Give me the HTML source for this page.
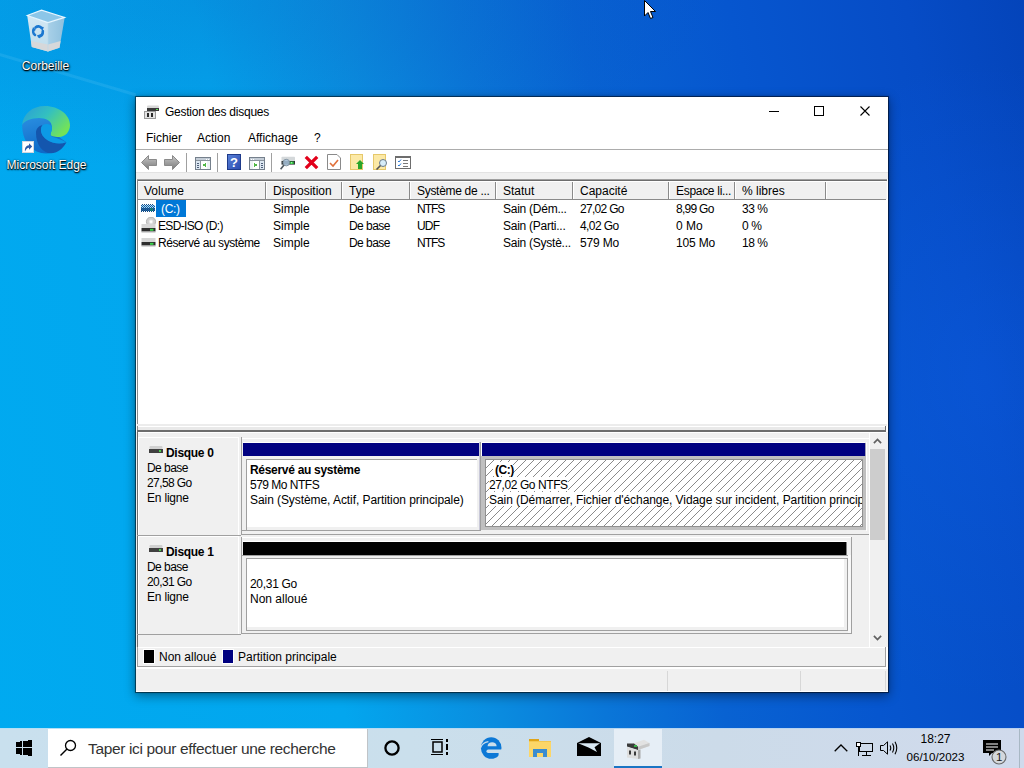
<!DOCTYPE html>
<html><head><meta charset="utf-8">
<style>
*{box-sizing:border-box;margin:0;padding:0}
html,body{width:1024px;height:768px;overflow:hidden}
body{position:relative;font-family:"Liberation Sans",sans-serif;font-size:12px;color:#000;
background:
 radial-gradient(ellipse 520px 170px at 200px 0px, rgba(12,70,170,.2), rgba(12,70,170,0)),
 radial-gradient(ellipse 260px 320px at 980px 380px, rgba(20,110,255,.22), rgba(20,110,255,0)),
 linear-gradient(78deg,#00aaf0 0%,#03a6ee 30%,#0a8ee0 42%,#0a76d8 52%,#0862d2 62%,#0656cf 75%,#064cc6 90%,#0444ba 100%);}
.a{position:absolute}
.t{position:absolute;white-space:pre;line-height:15px}
#win{left:135px;top:96px;width:754px;height:597px;background:#fff;background-clip:padding-box;border:1px solid rgba(0,0,0,.45);box-shadow:0 3px 10px rgba(0,0,0,.4),0 0 2px rgba(0,0,0,.2)}
</style></head><body>
<div class="a" style="left:0;top:0;width:136px;height:200px;background:linear-gradient(196.5deg, rgba(190,235,255,0) 0px, rgba(190,235,255,0) 89px, rgba(190,235,255,.1) 90px, rgba(190,235,255,.1) 92px, rgba(190,235,255,0) 93px)"></div><svg class="a" style="left:22px;top:6px;" width="48" height="50" viewBox="0 0 48 50"><defs><linearGradient id="binl" x1="0" y1="0" x2="0" y2="1"><stop offset="0" stop-color="#d4e8f4"/><stop offset="1" stop-color="#bcdcec"/></linearGradient><linearGradient id="binr" x1="0" y1="0" x2="1" y2="0"><stop offset="0" stop-color="#a8d0e8"/><stop offset="1" stop-color="#8ec0de"/></linearGradient></defs><path d="M5.2 9.4L26 16.6V45.6L9.8 41Z" fill="url(#binl)"/><path d="M26 16.6L42.7 11.4L37.5 41.7L26 45.6Z" fill="url(#binr)"/><path d="M5.2 9.4L19.5 4.2L42.7 11.4L26 16.6Z" fill="#8cc6e8"/><path d="M5.2 9.4L19.5 4.2L42.7 11.4L26 16.6Z" fill="none" stroke="#e8f6ff" stroke-width="1.1"/><path d="M8.9 35L26 38.5L38.6 35L37.5 41.7L26 45.6L9.8 41Z" fill="#d6d8da"/><path d="M26 16.6V45.6" stroke="#b8d8ea" stroke-width="0.6"/><g fill="none" stroke="#1c78d0" stroke-width="2.6" stroke-linecap="round"><path d="M13.5 21.5C15.5 19.8 18 20 19.5 22"/><path d="M20.8 25C21 28 19.5 30 17 30.5"/><path d="M13 29C11 27.5 10.8 25 11.8 23.5"/></g><g fill="#1c78d0"><path d="M17.5 20.5L21.8 21L20.5 25Z"/><path d="M19 28L18 32.5L14.8 29.5Z"/><path d="M10 25.5L11 21L14 24Z"/></g></svg><div class="t" style="left:0;top:59px;width:91px;text-align:center;color:#fff;font-size:12px;text-shadow:0 1px 1px #000,1px 1px 2px rgba(0,0,0,.8),0 0 2px rgba(0,0,0,.6)">Corbeille</div><svg class="a" style="left:22px;top:106px;" width="48" height="48" viewBox="0 0 48 48"><defs><linearGradient id="eg1" x1="0" y1="0" x2="1" y2="0.6"><stop offset="0" stop-color="#2a9cd8"/><stop offset="0.5" stop-color="#33c0c0"/><stop offset="1" stop-color="#72e25a"/></linearGradient><linearGradient id="eg2" x1="0" y1="0" x2="0.3" y2="1"><stop offset="0" stop-color="#2a8ee0"/><stop offset="1" stop-color="#0e6ac8"/></linearGradient></defs><path d="M0.2 19C0 36 11 47.5 24 47.5C33 47.5 40 43 44.3 36.3L37 31L29 28.5L30 21C30 15 24 12 17 12C9 12 2 15 0.2 19Z" fill="url(#eg2)"/><path d="M0.2 19C1 8 10 0 23 0C37 0 48 9 48 19C48 26 43 31 37 31C32 31 28.5 30 28.5 28.5C28.5 27 30 25 30 21C30 15 24 12 17 12C9 12 2 15 0.2 19Z" fill="url(#eg1)"/><path d="M21 19C16 20 14 23 14 27C14 39 21 47.3 29 47.3C35 47.3 41 43 44.3 36.3C38 38.5 31 37.5 26 34.5C21 31.5 18.5 27 19 23C19.3 21 20 19.6 21 19Z" fill="#1456ae"/><path d="M21 19C23 17.5 27 17.5 29.5 20C30.5 22 30 24.5 28.8 26.8C28.3 28 28.4 29.6 29.5 30.2C33 32 39 33 44.3 36.3C38 38.5 31 37.5 26 34.5C21 31.5 18.5 27 19 23C19.3 21 20 19.6 21 19Z" fill="#0c9ae6"/></svg><svg class="a" style="left:22px;top:141px;" width="12" height="12" viewBox="0 0 12 12"><rect x="0.5" y="0.5" width="11" height="11" fill="#fff" stroke="#d0d8e0"/><path d="M3 10.5C2.5 7 4 4.5 7 4.2V2.3L10.2 5.5L7 8.7V6.8C5.3 7 4 8.3 3 10.5Z" fill="#2c5aa8"/></svg><div class="t" style="left:0;top:158px;width:93px;text-align:center;color:#fff;font-size:12px;text-shadow:0 1px 1px #000,1px 1px 2px rgba(0,0,0,.8),0 0 2px rgba(0,0,0,.6)">Microsoft Edge</div><svg class="a" style="left:644px;top:0px;" width="13" height="20" viewBox="0 0 13 20"><path d="M0.5 0.5V16L4 12.5L6.5 18.5L9 17.5L6.5 11.5H11.5Z" fill="#fff" stroke="#000" stroke-width="1"/></svg>
<div id="win" class="a">
<svg class="a" style="left:8px;top:7px;" width="16" height="16" viewBox="0 0 16 16"><rect x="3" y="1.5" width="12" height="3" rx="1" fill="#d8d8d8"/><rect x="3" y="4" width="12" height="3" fill="#3a3a3a"/><rect x="12" y="5" width="2" height="1" fill="#5fe05f"/><rect x="0.5" y="7.5" width="11" height="7" fill="#e4e4e4" stroke="#9a9a9a"/><rect x="3" y="9" width="2" height="4" fill="#2a2a2a"/><rect x="7" y="9" width="2" height="4" fill="#2a2a2a"/></svg>
<div class="t" style="left:29px;top:8px;line-height:15px;font-size:12px;color:#000;letter-spacing:-0.25px">Gestion des disques</div>
<div class="a" style="left:633px;top:14px;width:10px;height:1px;background:#000"></div>
<div class="a" style="left:678px;top:9px;width:10px;height:10px;border:1px solid #000"></div>
<svg class="a" style="left:724px;top:9px;" width="10" height="10" viewBox="0 0 10 10"><path d="M0.5 0.5L9.5 9.5M9.5 0.5L0.5 9.5" stroke="#000" stroke-width="1.1"/></svg>
<div class="t" style="left:10px;top:34px;line-height:15px;font-size:12px;">Fichier</div>
<div class="t" style="left:61px;top:34px;line-height:15px;font-size:12px;">Action</div>
<div class="t" style="left:112px;top:34px;line-height:15px;font-size:12px;">Affichage</div>
<div class="t" style="left:178px;top:34px;line-height:15px;font-size:12px;">?</div>
<div class="a" style="left:0px;top:52px;width:752px;height:1px;background:#acacac"></div>
<svg class="a" style="left:5px;top:58px;" width="16" height="15" viewBox="0 0 16 15"><defs><linearGradient id="ga" x1="0" y1="0" x2="0" y2="1"><stop offset="0" stop-color="#c8c8c8"/><stop offset="1" stop-color="#7a7a7a"/></linearGradient></defs><path d="M0.5 7.5L7.5 0.5V4.5H15.5V10.5H7.5V14.5Z" fill="url(#ga)" stroke="#8a8a8a"/></svg>
<svg class="a" style="left:28px;top:58px;" width="16" height="15" viewBox="0 0 16 15"><path d="M15.5 7.5L8.5 0.5V4.5H0.5V10.5H8.5V14.5Z" fill="url(#ga)" stroke="#8a8a8a"/></svg>
<div class="a" style="left:50px;top:56px;width:1px;height:19px;background:#a0a0a0"></div>
<div class="a" style="left:81px;top:56px;width:1px;height:19px;background:#a0a0a0"></div>
<div class="a" style="left:135px;top:56px;width:1px;height:19px;background:#a0a0a0"></div>
<svg class="a" style="left:59px;top:60px;shape-rendering:crispEdges" width="16" height="13" viewBox="0 0 16 13"><g transform=""><rect x="0.5" y="0.5" width="15" height="12" fill="#fff" stroke="#75808c"/><rect x="1" y="1" width="14" height="2" fill="#c3ccd6"/><rect x="11" y="1.5" width="1" height="1" fill="#fff"/><rect x="13" y="1.5" width="1" height="1" fill="#fff"/><rect x="1" y="3" width="14" height="1" fill="#8a949e"/><rect x="1" y="4" width="4" height="8" fill="#dde8f2"/><rect x="5" y="4" width="1" height="8" fill="#8a949e"/><rect x="2" y="5.5" width="2" height="1" fill="#50607a"/><rect x="2" y="7.5" width="2" height="1" fill="#50607a"/><rect x="2" y="9.5" width="2" height="1" fill="#50607a"/><rect x="12" y="4" width="3" height="8" fill="#eef2f6"/><path d="M11 5.5V10.5L7.5 8Z" fill="#52b848"/></g></svg>
<svg class="a" style="left:91px;top:57px;" width="14" height="16" viewBox="0 0 14 16"><defs><linearGradient id="hq" x1="0" y1="0" x2="1" y2="1"><stop offset="0" stop-color="#5a82d8"/><stop offset="1" stop-color="#2a4ab0"/></linearGradient></defs><rect x="0.5" y="0.5" width="13" height="15" fill="url(#hq)" stroke="#1e3a8a"/><text x="7" y="13" font-family="Liberation Sans" font-size="13" font-weight="bold" fill="#fff" text-anchor="middle">?</text></svg>
<svg class="a" style="left:113px;top:60px;shape-rendering:crispEdges" width="16" height="13" viewBox="0 0 16 13"><g transform="translate(16,0) scale(-1,1)"><rect x="0.5" y="0.5" width="15" height="12" fill="#fff" stroke="#75808c"/><rect x="1" y="1" width="14" height="2" fill="#c3ccd6"/><rect x="11" y="1.5" width="1" height="1" fill="#fff"/><rect x="13" y="1.5" width="1" height="1" fill="#fff"/><rect x="1" y="3" width="14" height="1" fill="#8a949e"/><rect x="1" y="4" width="4" height="8" fill="#dde8f2"/><rect x="5" y="4" width="1" height="8" fill="#8a949e"/><rect x="2" y="5.5" width="2" height="1" fill="#50607a"/><rect x="2" y="7.5" width="2" height="1" fill="#50607a"/><rect x="2" y="9.5" width="2" height="1" fill="#50607a"/><rect x="12" y="4" width="3" height="8" fill="#eef2f6"/><path d="M11 5.5V10.5L7.5 8Z" fill="#52b848"/></g></svg>
<svg class="a" style="left:144px;top:57px;" width="16" height="16" viewBox="0 0 16 16"><rect x="1.5" y="2.8" width="13.5" height="4.5" rx="0.8" fill="#d4d8da"/><rect x="1.5" y="7" width="13.5" height="3.6" fill="#2e3436"/><rect x="9.5" y="7.6" width="4.2" height="2.4" fill="#2cc23c"/><rect x="11" y="8.3" width="1.2" height="1" fill="#d8ffd8"/><circle cx="6.3" cy="8.6" r="3.3" fill="#a8c4dc" fill-opacity="0.85" stroke="#7f8e9c" stroke-width="0.9"/><path d="M4 11L0.6 15.3" stroke="#4e5860" stroke-width="1.6"/></svg>
<svg class="a" style="left:168px;top:58px;" width="15" height="15" viewBox="0 0 15 15"><path d="M1.8 1.8L13.2 13.2M13.2 1.8L1.8 13.2" stroke="#e2001a" stroke-width="3.3"/></svg>
<svg class="a" style="left:191px;top:57px;" width="14" height="16" viewBox="0 0 14 16"><path d="M0.5 0.5H10L13.5 4V15.5H0.5Z" fill="#fff" stroke="#8a8a8a"/><path d="M3 9L6 12L11 6" stroke="#e0703a" stroke-width="1.6" fill="none"/></svg>
<svg class="a" style="left:214px;top:57px;" width="15" height="16" viewBox="0 0 15 16"><rect x="0.5" y="0.5" width="12" height="15" fill="#fce9a6" stroke="#e6c86a"/><path d="M10 6L14 10H12V15H8V10H6Z" fill="#2aa52a"/></svg>
<svg class="a" style="left:237px;top:57px;" width="15" height="16" viewBox="0 0 15 16"><rect x="0.5" y="0.5" width="12" height="15" fill="#fce9a6" stroke="#e6c86a"/><circle cx="10" cy="9" r="3.5" fill="#d6ecf8" stroke="#6a7a8a"/><path d="M7.5 11.5L3.5 15.5" stroke="#555" stroke-width="1.6"/></svg>
<svg class="a" style="left:259px;top:59px;" width="16" height="13" viewBox="0 0 16 13"><rect x="0.5" y="0.5" width="15" height="12" fill="#fff" stroke="#6d6d6d"/><rect x="1" y="1" width="14" height="1" fill="#6d6d6d"/><path d="M3 5L4 6L6 3.5M3 9L4 10L6 7.5" stroke="#2a7ad8" fill="none"/><rect x="8" y="4" width="5" height="1" fill="#7a7a7a"/><rect x="8" y="7" width="5" height="1" fill="#7a7a7a"/><rect x="8" y="10" width="5" height="1" fill="#7a7a7a"/></svg>
<div class="a" style="left:0px;top:75px;width:752px;height:1px;background:#e3e3e3"></div>
<div class="a" style="left:0px;top:76px;width:752px;height:7px;background:#f0f0f0"></div>
<div class="a" style="left:0px;top:82px;width:752px;height:253px;background:#fff"></div>
<div class="a" style="left:1px;top:82px;width:750px;height:1px;background:#a0a0a0"></div>
<div class="a" style="left:1px;top:83px;width:750px;height:1px;background:#6d6d6d"></div>
<div class="a" style="left:1px;top:83px;width:1px;height:252px;background:#8a8a8a"></div>
<div class="a" style="left:2px;top:84px;width:748px;height:18px;background:#f0f0f0;border-top:1px solid #fff;"></div>
<div class="a" style="left:2px;top:102px;width:748px;height:1px;background:#8a8a8a"></div>
<div class="t" style="left:8px;top:87px;line-height:15px;font-size:12px;">Volume</div>
<div class="a" style="left:129px;top:85px;width:1px;height:17px;background:#8a8a8a"></div>
<div class="a" style="left:130px;top:85px;width:1px;height:17px;background:#fff"></div>
<div class="t" style="left:137px;top:87px;line-height:15px;font-size:12px;">Disposition</div>
<div class="a" style="left:205px;top:85px;width:1px;height:17px;background:#8a8a8a"></div>
<div class="a" style="left:206px;top:85px;width:1px;height:17px;background:#fff"></div>
<div class="t" style="left:213px;top:87px;line-height:15px;font-size:12px;">Type</div>
<div class="a" style="left:273px;top:85px;width:1px;height:17px;background:#8a8a8a"></div>
<div class="a" style="left:274px;top:85px;width:1px;height:17px;background:#fff"></div>
<div class="t" style="left:281px;top:87px;line-height:15px;font-size:12px;letter-spacing:-0.3px">Système de ...</div>
<div class="a" style="left:359px;top:85px;width:1px;height:17px;background:#8a8a8a"></div>
<div class="a" style="left:360px;top:85px;width:1px;height:17px;background:#fff"></div>
<div class="t" style="left:367px;top:87px;line-height:15px;font-size:12px;">Statut</div>
<div class="a" style="left:436px;top:85px;width:1px;height:17px;background:#8a8a8a"></div>
<div class="a" style="left:437px;top:85px;width:1px;height:17px;background:#fff"></div>
<div class="t" style="left:444px;top:87px;line-height:15px;font-size:12px;">Capacité</div>
<div class="a" style="left:532px;top:85px;width:1px;height:17px;background:#8a8a8a"></div>
<div class="a" style="left:533px;top:85px;width:1px;height:17px;background:#fff"></div>
<div class="t" style="left:540px;top:87px;line-height:15px;font-size:12px;letter-spacing:-0.3px">Espace li...</div>
<div class="a" style="left:598px;top:85px;width:1px;height:17px;background:#8a8a8a"></div>
<div class="a" style="left:599px;top:85px;width:1px;height:17px;background:#fff"></div>
<div class="t" style="left:606px;top:87px;line-height:15px;font-size:12px;">% libres</div>
<div class="a" style="left:689px;top:85px;width:1px;height:17px;background:#8a8a8a"></div>
<div class="a" style="left:690px;top:85px;width:1px;height:17px;background:#fff"></div>
<div class="a" style="left:750px;top:84px;width:1px;height:18px;background:#f4f4f4"></div>
<div class="a" style="left:20px;top:103px;width:30px;height:17px;background:#0078d7"></div>
<div class="t" style="left:25px;top:105px;line-height:15px;font-size:12px;color:#fff;letter-spacing:-0.3px">(C:)</div>
<div class="t" style="left:137px;top:105px;line-height:15px;font-size:12px;">Simple</div>
<div class="t" style="left:213px;top:105px;line-height:15px;font-size:12px;letter-spacing:-0.55px">De base</div>
<div class="t" style="left:281px;top:105px;line-height:15px;font-size:12px;letter-spacing:-1.0px">NTFS</div>
<div class="t" style="left:367px;top:105px;line-height:15px;font-size:12px;letter-spacing:-0.25px">Sain (Dém...</div>
<div class="t" style="left:444px;top:105px;line-height:15px;font-size:12px;letter-spacing:-0.7px">27,02 Go</div>
<div class="t" style="left:540px;top:105px;line-height:15px;font-size:12px;letter-spacing:-0.73px">8,99 Go</div>
<div class="t" style="left:606px;top:105px;line-height:15px;font-size:12px;letter-spacing:-0.45px">33 %</div>
<div class="t" style="left:22px;top:122px;line-height:15px;font-size:12px;letter-spacing:-0.65px">ESD-ISO (D:)</div>
<div class="t" style="left:137px;top:122px;line-height:15px;font-size:12px;">Simple</div>
<div class="t" style="left:213px;top:122px;line-height:15px;font-size:12px;letter-spacing:-0.55px">De base</div>
<div class="t" style="left:281px;top:122px;line-height:15px;font-size:12px;letter-spacing:-0.8px">UDF</div>
<div class="t" style="left:367px;top:122px;line-height:15px;font-size:12px;letter-spacing:-0.25px">Sain (Parti...</div>
<div class="t" style="left:444px;top:122px;line-height:15px;font-size:12px;letter-spacing:-0.6px">4,02 Go</div>
<div class="t" style="left:540px;top:122px;line-height:15px;font-size:12px;">0 Mo</div>
<div class="t" style="left:606px;top:122px;line-height:15px;font-size:12px;letter-spacing:-0.4px">0 %</div>
<div class="t" style="left:22px;top:139px;line-height:15px;font-size:12px;letter-spacing:-0.42px">Réservé au système</div>
<div class="t" style="left:137px;top:139px;line-height:15px;font-size:12px;">Simple</div>
<div class="t" style="left:213px;top:139px;line-height:15px;font-size:12px;letter-spacing:-0.55px">De base</div>
<div class="t" style="left:281px;top:139px;line-height:15px;font-size:12px;letter-spacing:-1.0px">NTFS</div>
<div class="t" style="left:367px;top:139px;line-height:15px;font-size:12px;letter-spacing:-0.25px">Sain (Systè...</div>
<div class="t" style="left:444px;top:139px;line-height:15px;font-size:12px;letter-spacing:-0.16px">579 Mo</div>
<div class="t" style="left:540px;top:139px;line-height:15px;font-size:12px;letter-spacing:-0.16px">105 Mo</div>
<div class="t" style="left:606px;top:139px;line-height:15px;font-size:12px;letter-spacing:-0.45px">18 %</div>
<svg class="a" style="left:5px;top:107px;shape-rendering:crispEdges" width="14" height="8" viewBox="0 0 14 8"><rect x="1" y="0" width="1" height="1" fill="#1a4f85"/><rect x="3" y="0" width="1" height="1" fill="#1a4f85"/><rect x="5" y="0" width="1" height="1" fill="#1a4f85"/><rect x="7" y="0" width="1" height="1" fill="#1a4f85"/><rect x="9" y="0" width="1" height="1" fill="#1a4f85"/><rect x="11" y="0" width="1" height="1" fill="#1a4f85"/><rect x="0" y="1" width="1" height="1" fill="#1a5a95"/><rect x="1" y="1" width="1" height="1" fill="#a8dcff"/><rect x="2" y="1" width="1" height="1" fill="#1a5a95"/><rect x="3" y="1" width="1" height="1" fill="#a8dcff"/><rect x="4" y="1" width="1" height="1" fill="#1a5a95"/><rect x="5" y="1" width="1" height="1" fill="#a8dcff"/><rect x="6" y="1" width="1" height="1" fill="#1a5a95"/><rect x="7" y="1" width="1" height="1" fill="#a8dcff"/><rect x="8" y="1" width="1" height="1" fill="#1a5a95"/><rect x="9" y="1" width="1" height="1" fill="#a8dcff"/><rect x="10" y="1" width="1" height="1" fill="#1a5a95"/><rect x="11" y="1" width="1" height="1" fill="#a8dcff"/><rect x="12" y="1" width="1" height="1" fill="#1a5a95"/><rect x="13" y="1" width="1" height="1" fill="#a8dcff"/><rect x="0" y="2" width="1" height="1" fill="#a8dcff"/><rect x="1" y="2" width="1" height="1" fill="#1a5a95"/><rect x="2" y="2" width="1" height="1" fill="#a8dcff"/><rect x="3" y="2" width="1" height="1" fill="#1a5a95"/><rect x="4" y="2" width="1" height="1" fill="#a8dcff"/><rect x="5" y="2" width="1" height="1" fill="#1a5a95"/><rect x="6" y="2" width="1" height="1" fill="#a8dcff"/><rect x="7" y="2" width="1" height="1" fill="#1a5a95"/><rect x="8" y="2" width="1" height="1" fill="#a8dcff"/><rect x="9" y="2" width="1" height="1" fill="#1a5a95"/><rect x="10" y="2" width="1" height="1" fill="#a8dcff"/><rect x="11" y="2" width="1" height="1" fill="#1a5a95"/><rect x="12" y="2" width="1" height="1" fill="#a8dcff"/><rect x="13" y="2" width="1" height="1" fill="#1a5a95"/><rect x="0" y="3" width="1" height="1" fill="#1a5a95"/><rect x="1" y="3" width="1" height="1" fill="#a8dcff"/><rect x="2" y="3" width="1" height="1" fill="#1a5a95"/><rect x="3" y="3" width="1" height="1" fill="#a8dcff"/><rect x="4" y="3" width="1" height="1" fill="#1a5a95"/><rect x="5" y="3" width="1" height="1" fill="#a8dcff"/><rect x="6" y="3" width="1" height="1" fill="#1a5a95"/><rect x="7" y="3" width="1" height="1" fill="#a8dcff"/><rect x="8" y="3" width="1" height="1" fill="#1a5a95"/><rect x="9" y="3" width="1" height="1" fill="#a8dcff"/><rect x="10" y="3" width="1" height="1" fill="#1a5a95"/><rect x="11" y="3" width="1" height="1" fill="#a8dcff"/><rect x="12" y="3" width="1" height="1" fill="#1a5a95"/><rect x="13" y="3" width="1" height="1" fill="#a8dcff"/><rect x="0" y="4" width="1" height="1" fill="#2a65a0"/><rect x="1" y="4" width="1" height="1" fill="#0e4a85"/><rect x="2" y="4" width="1" height="1" fill="#2a65a0"/><rect x="3" y="4" width="1" height="1" fill="#0e4a85"/><rect x="4" y="4" width="1" height="1" fill="#2a65a0"/><rect x="5" y="4" width="1" height="1" fill="#0e4a85"/><rect x="6" y="4" width="1" height="1" fill="#2a65a0"/><rect x="7" y="4" width="1" height="1" fill="#0e4a85"/><rect x="8" y="4" width="1" height="1" fill="#2a65a0"/><rect x="9" y="4" width="1" height="1" fill="#106a70"/><rect x="10" y="4" width="1" height="1" fill="#1a8a7a"/><rect x="11" y="4" width="1" height="1" fill="#106a70"/><rect x="12" y="4" width="1" height="1" fill="#2a65a0"/><rect x="13" y="4" width="1" height="1" fill="#0e4a85"/><rect x="0" y="5" width="1" height="1" fill="#0e4a85"/><rect x="1" y="5" width="1" height="1" fill="#2a65a0"/><rect x="2" y="5" width="1" height="1" fill="#0e4a85"/><rect x="3" y="5" width="1" height="1" fill="#2a65a0"/><rect x="4" y="5" width="1" height="1" fill="#0e4a85"/><rect x="5" y="5" width="1" height="1" fill="#2a65a0"/><rect x="6" y="5" width="1" height="1" fill="#0e4a85"/><rect x="7" y="5" width="1" height="1" fill="#2a65a0"/><rect x="8" y="5" width="1" height="1" fill="#0e4a85"/><rect x="9" y="5" width="1" height="1" fill="#1a8a7a"/><rect x="10" y="5" width="1" height="1" fill="#106a70"/><rect x="11" y="5" width="1" height="1" fill="#1a8a7a"/><rect x="12" y="5" width="1" height="1" fill="#0e4a85"/><rect x="13" y="5" width="1" height="1" fill="#2a65a0"/><rect x="0" y="6" width="1" height="1" fill="#2a65a0"/><rect x="1" y="6" width="1" height="1" fill="#0e4a85"/><rect x="2" y="6" width="1" height="1" fill="#2a65a0"/><rect x="3" y="6" width="1" height="1" fill="#0e4a85"/><rect x="4" y="6" width="1" height="1" fill="#2a65a0"/><rect x="5" y="6" width="1" height="1" fill="#0e4a85"/><rect x="6" y="6" width="1" height="1" fill="#2a65a0"/><rect x="7" y="6" width="1" height="1" fill="#0e4a85"/><rect x="8" y="6" width="1" height="1" fill="#2a65a0"/><rect x="9" y="6" width="1" height="1" fill="#106a70"/><rect x="10" y="6" width="1" height="1" fill="#1a8a7a"/><rect x="11" y="6" width="1" height="1" fill="#106a70"/><rect x="12" y="6" width="1" height="1" fill="#2a65a0"/><rect x="13" y="6" width="1" height="1" fill="#0e4a85"/><rect x="0" y="7" width="1" height="1" fill="#0e4a85"/><rect x="2" y="7" width="1" height="1" fill="#0e4a85"/><rect x="4" y="7" width="1" height="1" fill="#0e4a85"/><rect x="6" y="7" width="1" height="1" fill="#0e4a85"/><rect x="8" y="7" width="1" height="1" fill="#0e4a85"/><rect x="10" y="7" width="1" height="1" fill="#0e4a85"/><rect x="12" y="7" width="1" height="1" fill="#0e4a85"/></svg>
<svg class="a" style="left:5px;top:120px;" width="16" height="16" viewBox="0 0 16 16"><circle cx="10" cy="4.7" r="4.6" fill="#cfcfcf" stroke="#a8a8a8" stroke-width="0.8"/><circle cx="10" cy="4.7" r="2.2" fill="#e6e6e6"/><circle cx="10" cy="4.7" r="1.2" fill="#fff"/><rect x="0.5" y="7" width="14" height="4" fill="#d6d6d6"/><rect x="0.5" y="11" width="14" height="3.5" fill="#2e2e2e"/><rect x="9" y="11.8" width="3.5" height="2" fill="#3ad24a"/><rect x="0.5" y="14.5" width="14" height="1" fill="#b0b0b0"/></svg>
<svg class="a" style="left:5px;top:141px;" width="16" height="10" viewBox="0 0 16 10"><rect x="0.5" y="0" width="14" height="4" fill="#d6d6d6"/><rect x="0.5" y="4" width="14" height="3.5" fill="#2e2e2e"/><rect x="9" y="4.8" width="3.5" height="2" fill="#3ad24a"/><rect x="0.5" y="7.5" width="14" height="1" fill="#b0b0b0"/></svg>
<div class="a" style="left:1px;top:327px;width:750px;height:2px;background:#ececec"></div>
<div class="a" style="left:2px;top:329px;width:748px;height:1px;background:#fff"></div>
<div class="a" style="left:2px;top:330px;width:748px;height:3px;background:#e9e9e9"></div>
<div class="a" style="left:1px;top:333px;width:749px;height:2px;background:#6d6d6d"></div>
<div class="a" style="left:749px;top:329px;width:1px;height:4px;background:#6d6d6d"></div>
<div class="a" style="left:0px;top:335px;width:752px;height:215px;background:#f0f0f0"></div>
<div class="a" style="left:1px;top:335px;width:1px;height:236px;background:#6d6d6d"></div>
<div class="a" style="left:2px;top:335px;width:748px;height:1px;background:#fff"></div>
<div class="a" style="left:733px;top:336px;width:1px;height:214px;background:#fff"></div>
<div class="a" style="left:734px;top:336px;width:16px;height:214px;background:#f0f0f0"></div>
<div class="a" style="left:734px;top:352px;width:15px;height:91px;background:#cdcdcd"></div>
<svg class="a" style="left:737px;top:340px;" width="9" height="7" viewBox="0 0 9 7"><path d="M0.9 6.1L4.5 2.4L8.1 6.1" stroke="#606060" stroke-width="1.7" fill="none"/></svg>
<svg class="a" style="left:737px;top:538px;" width="9" height="7" viewBox="0 0 9 7"><path d="M0.9 0.9L4.5 4.6L8.1 0.9" stroke="#606060" stroke-width="1.7" fill="none"/></svg>
<div class="a" style="left:2px;top:340px;width:101px;height:98px;background:#f0f0f0;border-top:1px solid #fff;border-left:1px solid #fff;border-right:1px solid #fff"></div>
<div class="a" style="left:1px;top:438px;width:104px;height:1px;background:#a0a0a0"></div>
<svg class="a" style="left:13px;top:349px;" width="14" height="9" viewBox="0 0 14 9"><rect x="0.5" y="0" width="13" height="3" rx="1" fill="#d0d0d0"/><rect x="0" y="3" width="14" height="4" fill="#404040"/><rect x="10" y="4" width="2" height="2" fill="#4cd24c"/></svg>
<div class="t" style="left:30px;top:349px;line-height:15px;font-size:12px;font-weight:bold;letter-spacing:-0.3px">Disque 0</div>
<div class="t" style="left:11px;top:364px;line-height:15px;font-size:12px;letter-spacing:-0.55px">De base</div>
<div class="t" style="left:11px;top:379px;line-height:15px;font-size:12px;letter-spacing:-0.6px">27,58 Go</div>
<div class="t" style="left:11px;top:394px;line-height:15px;font-size:12px;letter-spacing:-0.2px">En ligne</div>
<div class="a" style="left:2px;top:439px;width:101px;height:98px;background:#f0f0f0;border-top:1px solid #fff;border-left:1px solid #fff;border-right:1px solid #fff"></div>
<div class="a" style="left:1px;top:537px;width:104px;height:1px;background:#a0a0a0"></div>
<svg class="a" style="left:13px;top:448px;" width="14" height="9" viewBox="0 0 14 9"><rect x="0.5" y="0" width="13" height="3" rx="1" fill="#d0d0d0"/><rect x="0" y="3" width="14" height="4" fill="#404040"/><rect x="10" y="4" width="2" height="2" fill="#4cd24c"/></svg>
<div class="t" style="left:30px;top:448px;line-height:15px;font-size:12px;font-weight:bold;letter-spacing:-0.3px">Disque 1</div>
<div class="t" style="left:11px;top:463px;line-height:15px;font-size:12px;letter-spacing:-0.55px">De base</div>
<div class="t" style="left:11px;top:478px;line-height:15px;font-size:12px;letter-spacing:-0.6px">20,31 Go</div>
<div class="t" style="left:11px;top:493px;line-height:15px;font-size:12px;letter-spacing:-0.2px">En ligne</div>
<div class="a" style="left:105px;top:341px;width:628px;height:1px;background:#fff"></div>
<div class="a" style="left:105px;top:340px;width:1px;height:98px;background:#a0a0a0"></div>
<div class="a" style="left:106px;top:437px;width:627px;height:1px;background:#a0a0a0"></div>
<div class="a" style="left:107px;top:345px;width:236px;height:1px;background:#fff"></div>
<div class="a" style="left:107px;top:346px;width:236px;height:13px;background:#000080"></div>
<div class="a" style="left:343px;top:345px;width:1px;height:89px;background:#c8c8d8"></div>
<div class="a" style="left:344px;top:345px;width:1px;height:89px;background:#a0a0a0"></div>
<div class="a" style="left:345px;top:345px;width:1px;height:14px;background:#fff"></div>
<div class="a" style="left:346px;top:345px;width:383px;height:1px;background:#fff"></div>
<div class="a" style="left:346px;top:346px;width:383px;height:13px;background:#000080"></div>
<div class="a" style="left:729px;top:346px;width:1px;height:13px;background:#a0a0b8"></div>
<div class="a" style="left:730px;top:345px;width:1px;height:89px;background:#fff"></div>
<div class="a" style="left:106px;top:433px;width:239px;height:1px;background:#a0a0a0"></div>
<div class="a" style="left:110px;top:362px;width:231px;height:1px;background:#a0a0a0"></div>
<div class="a" style="left:110px;top:362px;width:1px;height:71px;background:#a0a0a0"></div>
<div class="a" style="left:111px;top:363px;width:230px;height:67px;background:#fff"></div>
<div class="t" style="left:114px;top:366px;line-height:15px;font-size:12px;font-weight:bold;letter-spacing:-0.3px">Réservé au système</div>
<div class="t" style="left:114px;top:381px;line-height:15px;font-size:12px;letter-spacing:-0.5px">579 Mo NTFS</div>
<div class="t" style="left:114px;top:396px;line-height:15px;font-size:12px;letter-spacing:-0.07px">Sain (Système, Actif, Partition principale)</div>
<div class="a" style="left:345px;top:359px;width:385px;height:74px;background:#c0c0c0"></div>
<div class="a" style="left:349px;top:362px;width:378px;height:68px;background:#909090"></div>
<svg class="a" style="left:350px;top:363px;shape-rendering:crispEdges" width="376" height="66" viewBox="0 0 376 66"><defs><pattern id="hp" width="8" height="8" patternUnits="userSpaceOnUse"><rect x='0' y='7' width='1' height='1' fill='#8a8a8a'/><rect x='1' y='6' width='1' height='1' fill='#8a8a8a'/><rect x='2' y='5' width='1' height='1' fill='#8a8a8a'/><rect x='3' y='4' width='1' height='1' fill='#8a8a8a'/><rect x='4' y='3' width='1' height='1' fill='#8a8a8a'/><rect x='5' y='2' width='1' height='1' fill='#8a8a8a'/><rect x='6' y='1' width='1' height='1' fill='#8a8a8a'/><rect x='7' y='0' width='1' height='1' fill='#8a8a8a'/></pattern></defs><rect width="376" height="66" fill="#fff"/><rect width="376" height="66" fill="url(#hp)"/></svg>
<div class="a" style="left:357px;top:365px;width:20px;height:14px;background:#fff"></div>
<div class="t" style="left:359px;top:366px;line-height:15px;font-size:12px;font-weight:bold;letter-spacing:-0.5px">(C:)</div>
<div class="t" style="left:353px;top:380px;height:14px;line-height:16px;background:#fff;letter-spacing:-0.41px">27,02 Go NTFS</div>
<div class="a" style="left:353px;top:395px;width:373px;height:16px;overflow:hidden"><div class="t" style="left:0;top:0;height:14px;line-height:16px;background:#fff;letter-spacing:-0.07px">Sain (Démarrer, Fichier d'échange, Vidage sur incident, Partition principale)</div></div>
<div class="a" style="left:105px;top:440px;width:611px;height:1px;background:#fff"></div>
<div class="a" style="left:105px;top:440px;width:1px;height:97px;background:#a0a0a0"></div>
<div class="a" style="left:715px;top:440px;width:1px;height:97px;background:#a0a0a0"></div>
<div class="a" style="left:105px;top:536px;width:611px;height:1px;background:#a0a0a0"></div>
<div class="a" style="left:107px;top:444px;width:604px;height:1px;background:#fff"></div>
<div class="a" style="left:107px;top:445px;width:603px;height:13px;background:#000"></div>
<div class="a" style="left:710px;top:445px;width:1px;height:13px;background:#808080"></div>
<div class="a" style="left:106px;top:458px;width:606px;height:1px;background:#a0a0a0"></div>
<div class="a" style="left:110px;top:461px;width:601px;height:1px;background:#a0a0a0"></div>
<div class="a" style="left:110px;top:461px;width:1px;height:72px;background:#a0a0a0"></div>
<div class="a" style="left:111px;top:462px;width:597px;height:68px;background:#fff"></div>
<div class="a" style="left:711px;top:461px;width:1px;height:73px;background:#a0a0a0"></div>
<div class="a" style="left:110px;top:533px;width:602px;height:1px;background:#a0a0a0"></div>
<div class="a" style="left:712px;top:458px;width:3px;height:78px;background:#f8f8f8"></div>
<div class="t" style="left:114px;top:480px;line-height:15px;font-size:12px;letter-spacing:-0.3px">20,31 Go</div>
<div class="t" style="left:114px;top:495px;line-height:15px;font-size:12px;">Non alloué</div>
<div class="a" style="left:1px;top:550px;width:749px;height:1px;background:#fff"></div>
<div class="a" style="left:1px;top:551px;width:749px;height:18px;background:#f0f0f0"></div>
<div class="a" style="left:1px;top:569px;width:749px;height:1px;background:#a0a0a0"></div>
<div class="a" style="left:749px;top:550px;width:1px;height:20px;background:#a0a0a0"></div>
<div class="a" style="left:1px;top:550px;width:1px;height:20px;background:#a0a0a0"></div>
<div class="a" style="left:7px;top:552px;width:12px;height:15px;background:#000;border:1px solid #fff"></div>
<div class="t" style="left:23px;top:553px;line-height:15px;font-size:12px;">Non alloué</div>
<div class="a" style="left:86px;top:552px;width:12px;height:15px;background:#000080;border:1px solid #fff"></div>
<div class="t" style="left:102px;top:553px;line-height:15px;font-size:12px;">Partition principale</div>
<div class="a" style="left:0px;top:570px;width:752px;height:2px;background:#fff"></div>
<div class="a" style="left:0px;top:572px;width:752px;height:22px;background:#f0f0f0"></div>
<div class="a" style="left:531px;top:574px;width:1px;height:20px;background:#d7d7d7"></div>
<div class="a" style="left:664px;top:574px;width:1px;height:20px;background:#d7d7d7"></div>
<div class="a" style="left:749px;top:574px;width:1px;height:20px;background:#d7d7d7"></div>
</div>
<div class="a" style="left:0;top:728px;width:1024px;height:40px;background:linear-gradient(to right,#c9e0ee 0%,#cadfec 40%,#ccdbe9 70%,#d0daec 100%)"></div>
<div class="a" style="left:0;top:728px;width:1024px;height:1px;background:linear-gradient(to right,#b4e0f6,#b8d0ee)"></div>
<svg class="a" style="left:16px;top:740px;shape-rendering:crispEdges" width="17" height="17" viewBox="0 0 17 17"><path d="M0 2L6 1.2V7H0Z" fill="#000"/><path d="M7 1L16 0V7H7Z" fill="#000"/><path d="M0 8H6V14.8L0 14Z" fill="#000"/><path d="M7 8H16V16L7 15Z" fill="#000"/></svg>
<div class="a" style="left:48px;top:729px;width:320px;height:39px;background:#fff;border-right:1px solid #c0c4c8;border-bottom:1px solid #c0c4c8"></div>
<svg class="a" style="left:59px;top:739px" width="18" height="18" viewBox="0 0 18 18"><circle cx="11.5" cy="6.5" r="5" stroke="#000" stroke-width="1.3" fill="none"/><path d="M8 10L1.5 16.5" stroke="#000" stroke-width="1.4"/></svg>
<div class="t" style="left:88px;top:739px;line-height:20px;font-size:15.5px;letter-spacing:-0.35px;color:#333">Taper ici pour effectuer une recherche</div>
<svg class="a" style="left:383px;top:739px" width="18" height="18" viewBox="0 0 18 18"><circle cx="9" cy="9" r="6.6" stroke="#000" stroke-width="2.3" fill="none"/></svg>
<svg class="a" style="left:431px;top:739px;shape-rendering:crispEdges" width="18" height="16" viewBox="0 0 18 16"><rect x="0" y="0" width="12" height="1" fill="#000"/><rect x="0" y="15" width="12" height="1" fill="#000"/><rect x="2" y="3" width="9" height="10" stroke="#000" stroke-width="1.5" fill="none" shape-rendering="auto"/><rect x="15" y="0" width="2" height="3" fill="#000"/><rect x="15" y="5" width="2" height="6" fill="#000"/><rect x="15" y="13" width="2" height="3" fill="#000"/></svg>
<svg class="a" style="left:480px;top:737px" width="22" height="22" viewBox="0 0 22 22"><defs><mask id="em"><rect width="22" height="22" fill="#fff"/><path d="M7.6 9.2A4.5 4 0 0 1 16.6 9.2Z" fill="#000"/><path d="M8.2 12.4H23V15.9H8.2A1.75 1.75 0 0 1 8.2 12.4Z" fill="#000"/><rect x="18.6" y="15.9" width="4" height="7" fill="#000"/><path d="M0.5 11.2C1.5 7.5 4.5 5.2 8.4 4.6" stroke="#000" stroke-width="1.1" fill="none"/></mask></defs><ellipse cx="11.2" cy="11" rx="10.3" ry="10.8" fill="#0c78d6" mask="url(#em)"/></svg>
<svg class="a" style="left:529px;top:739px;shape-rendering:crispEdges" width="22" height="18" viewBox="0 0 22 18"><path d="M0 0H9L10 1H10V3H0Z" fill="#e0a418"/><rect x="0" y="3" width="22" height="15" fill="#fcd668"/><rect x="0" y="2" width="22" height="1" fill="#f4c850"/><path d="M4 18V10H18V18H14V14H8V18Z" fill="#3a8cd0"/></svg>
<svg class="a" style="left:577px;top:737px" width="25" height="20" viewBox="0 0 25 20"><path d="M0 6L12 0L24 6V19H0Z" fill="#000"/><path d="M1.2 6.2L23 6.2L17.5 10.2L20 15L11.5 10.4Z" fill="#d8e8f2"/></svg>
<div class="a" style="left:614px;top:729px;width:48px;height:39px;background:#e6eef6"></div>
<div class="a" style="left:614px;top:766px;width:48px;height:2px;background:#1a74c4"></div>
<svg class="a" style="left:626px;top:739px" width="24" height="21" viewBox="0 0 24 21"><path d="M7 4.5L18 0.8L23.5 4L23.5 7L12 11L7 8Z" fill="#e2e2e2"/><path d="M7 4.5L12 7.8L23.5 4L23.5 7L12 11L7 8Z" fill="#c8c8c8"/><path d="M1 4.5L8 4.5L12 7.8V11L1 7.5Z" fill="#3a3a3a"/><rect x="8" y="6" width="3" height="2" fill="#38b048"/><path d="M1 8L12 11.3V20L1 18.5Z" fill="#dedede"/><path d="M12 11.3L14.5 10.5V19.5L12 20Z" fill="#a8a8a8"/><rect x="3" y="11.5" width="2" height="4" fill="#3a3a3a"/><rect x="8" y="12.5" width="2" height="4" fill="#3a3a3a"/></svg>
<svg class="a" style="left:834px;top:744px" width="14" height="8" viewBox="0 0 14 8"><path d="M0.7 7.3L7 1L13.3 7.3" stroke="#000" stroke-width="1.3" fill="none"/></svg>
<svg class="a" style="left:856px;top:742px;shape-rendering:crispEdges" width="17" height="14" viewBox="0 0 17 14"><rect x="3.5" y="1.5" width="13" height="8" stroke="#000" fill="none"/><rect x="10" y="10" width="1" height="3" fill="#000"/><rect x="6" y="13" width="9" height="1" fill="#000"/><rect x="0.5" y="0.5" width="4" height="4" fill="#fff" stroke="#000"/><rect x="2" y="5" width="1" height="9" fill="#000"/></svg>
<svg class="a" style="left:880px;top:741px" width="18" height="14" viewBox="0 0 18 14"><path d="M0.5 4.5H3.5L7.5 0.8V13.2L3.5 9.5H0.5Z" stroke="#000" fill="none"/><path d="M10 4.5Q11.5 7 10 9.5M12.5 2.5Q15 7 12.5 11.5M15 0.8Q18.5 7 15 13.2" stroke="#000" fill="none" stroke-width="1.1"/></svg>
<div class="t" style="left:900px;top:732px;width:71px;text-align:center;line-height:15px;font-size:12px;color:#000">18:27</div>
<div class="t" style="left:900px;top:749px;width:71px;text-align:center;line-height:15px;font-size:11.6px;color:#000">06/10/2023</div>
<svg class="a" style="left:983px;top:740px" width="25" height="25" viewBox="0 0 25 25"><path d="M0 0H18V13H9L6 16V13H0Z" fill="#000"/><path d="M3 4H15M3 7H15M3 10H11" stroke="#fff" stroke-width="1.2"/><circle cx="16" cy="17" r="7" fill="#d4d8dc" stroke="#6a6a6a" stroke-width="1.1"/><text x="16.2" y="21.2" font-family="Liberation Sans" font-size="11.5" fill="#202020" text-anchor="middle">1</text></svg>
<div class="a" style="left:1019px;top:729px;width:1px;height:39px;background:#a8b8c4"></div>
</body></html>
